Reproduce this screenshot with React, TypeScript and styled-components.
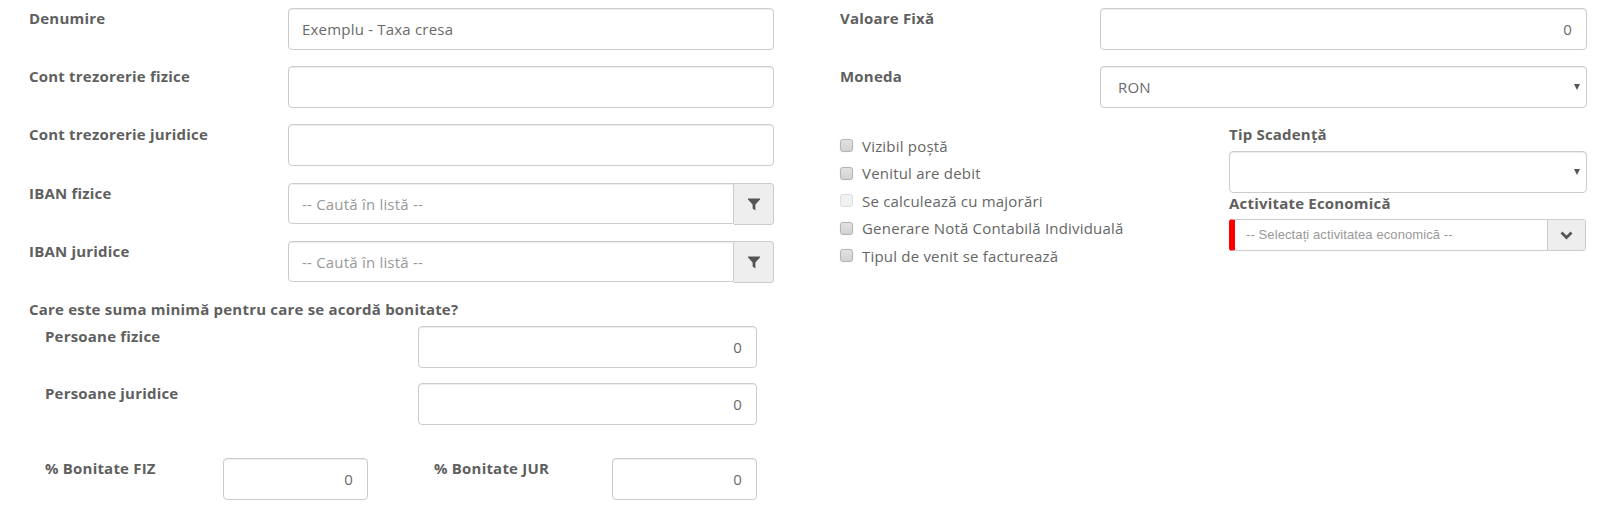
import React from 'react';
import styled, { createGlobalStyle } from 'styled-components';

const GlobalStyle = createGlobalStyle`
  html, body {
    margin: 0;
    padding: 0;
    background: #fff;
  }
  body {
    font-family: "Open Sans", sans-serif;
    font-size: 15px;
    letter-spacing: 0.2px;
    color: #5f5f5f;
  }
`;

const Page = styled.form`
  display: flex;
  width: 1609px;
  height: 513px;
  overflow: hidden;
  box-sizing: border-box;
  padding: 8px 22px 0 29px;
`;

const Column = styled.div<{ $width: number; $gap?: number }>`
  width: ${(p) => p.$width}px;
  margin-right: ${(p) => p.$gap || 0}px;
  flex: none;
`;

const Row = styled.div<{ $indent?: number; $bottom?: number }>`
  display: flex;
  align-items: flex-start;
  margin-left: ${(p) => p.$indent || 0}px;
  margin-right: ${(p) => (p.$indent ? p.$indent + 1 : 0)}px;
  margin-bottom: ${(p) => (p.$bottom === undefined ? 16 : p.$bottom)}px;
`;

const Label = styled.label<{ $width?: number; $left?: number }>`
  display: block;
  flex: none;
  width: ${(p) => (p.$width ? `${p.$width}px` : 'auto')};
  margin-left: ${(p) => p.$left || 0}px;
  font-weight: 700;
  font-size: 15px;
  line-height: 20px;
  color: #5f5f5f;
`;

const Input = styled.input<{ $right?: boolean; $width?: number }>`
  display: block;
  box-sizing: border-box;
  flex: ${(p) => (p.$width ? 'none' : '1 1 0')};
  width: ${(p) => (p.$width ? `${p.$width}px` : '100%')};
  min-width: 0;
  height: 42px;
  padding: 6px 14px 6px 13px;
  border: 1px solid #ccc;
  border-radius: 4px;
  box-shadow: inset 0 1px 1px rgba(0, 0, 0, 0.075);
  background: #fff;
  font-family: "Open Sans", sans-serif;
  font-size: 15px;
  letter-spacing: 0.2px;
  color: #6a6a6a;
  text-align: ${(p) => (p.$right ? 'right' : 'left')};
  outline: none;

  &::placeholder {
    color: #999;
    opacity: 1;
  }
`;

const InputGroup = styled.div`
  display: flex;
  align-items: flex-start;
  flex: 1 1 0;
  min-width: 0;

  ${Input} {
    height: 41px;
    border-radius: 4px 0 0 4px;
  }
`;

const Addon = styled.span`
  display: flex;
  align-items: center;
  justify-content: center;
  flex: none;
  width: 40px;
  height: 42px;
  box-sizing: border-box;
  border: 1px solid #ccc;
  border-left: 0;
  border-radius: 0 4px 4px 0;
  background: #eee;
  color: #555;
`;

const SelectWrap = styled.div`
  position: relative;
  flex: 1 1 0;
  min-width: 0;

  &::after {
    content: '';
    position: absolute;
    right: 7px;
    top: 18px;
    border-left: 3.5px solid transparent;
    border-right: 3.5px solid transparent;
    border-top: 6px solid #555;
  }
`;

const Select = styled.select`
  display: block;
  box-sizing: border-box;
  width: 100%;
  height: 42px;
  padding: 6px 13px 6px 17px;
  border: 1px solid #ccc;
  border-radius: 4px;
  box-shadow: inset 0 1px 1px rgba(0, 0, 0, 0.075);
  background: #fff;
  appearance: none;
  font-family: "Open Sans", sans-serif;
  font-size: 15px;
  letter-spacing: 0.2px;
  color: #6a6a6a;
  outline: none;
`;

const OptionsRow = styled.div`
  display: flex;
  align-items: flex-start;
  margin-top: 16px;
`;

const CheckList = styled.div`
  flex: none;
  width: 389px;
  padding-top: 8px;
`;

const CheckRow = styled.label`
  display: flex;
  align-items: center;
  height: 27.5px;
  font-size: 15px;
  color: #666;
`;

const CheckBox = styled.input.attrs({ type: 'checkbox' })`
  appearance: none;
  box-sizing: border-box;
  width: 13px;
  height: 13px;
  margin: 0 9px 0 0;
  border: 1px solid #b4b4b4;
  border-radius: 3px;
  background: linear-gradient(#e2e2e2, #d2d2d2);
  box-shadow: 0 0 1px rgba(0, 0, 0, 0.2);

  &:disabled {
    border-color: #dcdcdc;
    background: #f1f1f1;
    box-shadow: none;
  }
`;

const SideFields = styled.div`
  flex: 1 1 0;
  min-width: 0;
`;

const SideLabel = styled(Label)<{ $under: number }>`
  margin-bottom: ${(p) => p.$under}px;
`;

const Combo = styled.div`
  display: flex;
  height: 32px;
  box-sizing: border-box;
  margin-right: 1px;
  border: 1px solid #ccc;
  border-left: 6px solid #f00;
  border-radius: 3px;
  background: #fff;
`;

const ComboText = styled.span`
  flex: 1 1 0;
  padding-left: 11px;
  font-family: "Liberation Sans", Arial, sans-serif;
  font-size: 13px;
  letter-spacing: 0.1px;
  line-height: 30px;
  color: #999;
`;

const ComboArrow = styled.span`
  display: flex;
  align-items: center;
  justify-content: center;
  flex: none;
  width: 37px;
  border-left: 1px solid #ccc;
  background: #eee;
  color: #555;
`;

const Question = styled.div`
  font-weight: 700;
  font-size: 15px;
  line-height: 20px;
  color: #5f5f5f;
  margin: 3px 0 7px;
`;

const FunnelIcon = () => (
  <svg width="12" height="13" viewBox="0 0 12 13">
    <path d="M0 0.5h12v1L7.4 6.4V12.5L4.6 10.6V6.4L0 1.5z" fill="#555" />
  </svg>
);

const ChevronIcon = () => (
  <svg width="13" height="9" viewBox="0 0 13 9">
    <path d="M1.5 1.5l5 5 5-5" fill="none" stroke="#555" strokeWidth="2.8" />
  </svg>
);

const fields = ['Denumire', 'Cont trezorerie fizice', 'Cont trezorerie juridice'];
const ibans = ['IBAN fizice', 'IBAN juridice'];
const checks = [
  { text: 'Vizibil poștă' },
  { text: 'Venitul are debit' },
  { text: 'Se calculează cu majorări', disabled: true },
  { text: 'Generare Notă Contabilă Individuală' },
  { text: 'Tipul de venit se facturează' },
];

export default function App() {
  return (
    <>
      <GlobalStyle />
      <Page>
        <Column $width={745} $gap={66}>
          {fields.map((name, i) => (
            <Row key={name} $bottom={i === 2 ? 17 : 16}>
              <Label $width={259}>{name}</Label>
              <Input readOnly value={i === 0 ? 'Exemplu - Taxa cresa' : ''} />
            </Row>
          ))}
          {ibans.map((name) => (
            <Row key={name}>
              <Label $width={259}>{name}</Label>
              <InputGroup>
                <Input readOnly placeholder="-- Caută în listă --" />
                <Addon><FunnelIcon /></Addon>
              </InputGroup>
            </Row>
          ))}
          <Question>Care este suma minimă pentru care se acordă bonitate?</Question>
          <Row $indent={16} $bottom={15}>
            <Label $width={373}>Persoane fizice</Label>
            <Input readOnly $right value="0" />
          </Row>
          <Row $indent={16} $bottom={33}>
            <Label $width={373}>Persoane juridice</Label>
            <Input readOnly $right value="0" />
          </Row>
          <Row $indent={16}>
            <Label $width={178}>% Bonitate FIZ</Label>
            <Input readOnly $right $width={145} value="0" />
            <Label $width={178} $left={66}>% Bonitate JUR</Label>
            <Input readOnly $right $width={145} value="0" />
          </Row>
        </Column>
        <Column $width={747}>
          <Row>
            <Label $width={260}>Valoare Fixă</Label>
            <Input readOnly $right value="0" />
          </Row>
          <Row $bottom={0}>
            <Label $width={260}>Moneda</Label>
            <SelectWrap>
              <Select defaultValue="RON">
                <option>RON</option>
              </Select>
            </SelectWrap>
          </Row>
          <OptionsRow>
            <CheckList>
              {checks.map((c) => (
                <CheckRow key={c.text}>
                  <CheckBox disabled={c.disabled} />
                  {c.text}
                </CheckRow>
              ))}
            </CheckList>
            <SideFields>
              <SideLabel $under={7}>Tip Scadență</SideLabel>
              <SelectWrap>
                <Select />
              </SelectWrap>
              <SideLabel $under={6}>Activitate Economică</SideLabel>
              <Combo>
                <ComboText>-- Selectați activitatea economică --</ComboText>
                <ComboArrow><ChevronIcon /></ComboArrow>
              </Combo>
            </SideFields>
          </OptionsRow>
        </Column>
      </Page>
    </>
  );
}
